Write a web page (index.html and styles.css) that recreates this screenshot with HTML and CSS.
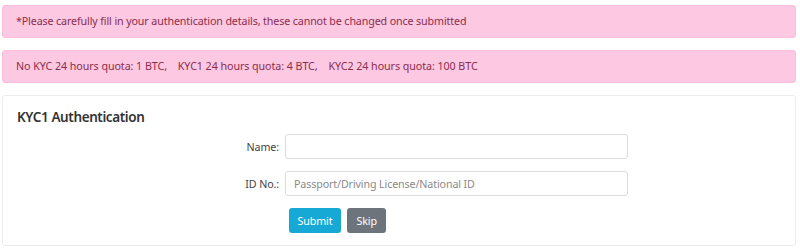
FILE: index.html
```html
<!DOCTYPE html>
<html lang="en">
<head>
  <meta charset="UTF-8" />
  <meta name="viewport" content="width=device-width, initial-scale=1.0" />
  <title>KYC Authentication</title>
  <link rel="stylesheet" href="styles.css">
</head>
<body>
  <div class="alert">*Please carefully fill in your authentication details, these cannot be changed once submitted</div>
  <div class="alert alert-wide">No KYC 24 hours quota: 1 BTC,&nbsp;&nbsp;&nbsp; KYC1 24 hours quota: 4 BTC,&nbsp;&nbsp;&nbsp; KYC2 24 hours quota: 100 BTC</div>

  <div class="card">
    <h4 class="card-title">KYC1 Authentication</h4>
    <form class="kyc-form">
      <div class="form-row">
        <label for="name">Name:</label>
        <input type="text" id="name">
      </div>
      <div class="form-row">
        <label for="idno">ID No.:</label>
        <input type="text" id="idno" placeholder="Passport/Driving License/National ID">
      </div>
      <div class="form-row">
        <span class="spacer"></span>
        <div class="button-group">
          <button type="button" class="btn btn-info">Submit</button>
          <button type="button" class="btn btn-secondary">Skip</button>
        </div>
      </div>
    </form>
  </div>
</body>
</html>
```

FILE: styles.css
```css
body {
  margin: 0;
  padding: 5px 4px 0 2px;
  font-family: 'Noto Sans', sans-serif;
  font-size: 10.7px;
  letter-spacing: -0.12px;
  background-color: #fff;
  color: #333;
}

.alert {
  background-color: #fdc8e1;
  color: #8b2d4f;
  border: 1px solid #fbbfd9;
  border-radius: 3px;
  height: 31px;
  line-height: 31px;
  padding: 0 13px;
  margin-bottom: 12px;
  white-space: nowrap;
}

.alert-wide {
  letter-spacing: -0.06px;
}

.card {
  border: 1px solid #ececec;
  border-radius: 3px;
  height: 151px;
  box-sizing: border-box;
  padding: 12px 14px 0;
}

.card-title {
  margin: 0 0 8px;
  font-size: 13.5px;
  line-height: 18px;
  letter-spacing: -0.4px;
  font-weight: 600;
  color: #333;
}

.kyc-form {
  display: flex;
  flex-direction: column;
  gap: 12px;
}

.form-row {
  display: flex;
  align-items: center;
}

.form-row label,
.spacer {
  width: 262px;
  text-align: right;
  padding-right: 6px;
  color: #444;
}

input[type="text"] {
  width: 343px;
  height: 25px;
  box-sizing: border-box;
  border: 1px solid #dcdcdc;
  border-radius: 3px;
  padding: 0 8px;
  font-family: inherit;
  font-size: 10.7px;
  letter-spacing: -0.12px;
  color: #333;
}

input::placeholder {
  color: #8a8a8a;
}

.button-group {
  display: flex;
  gap: 6px;
  padding-left: 4px;
}

.btn {
  height: 25px;
  border: none;
  border-radius: 3px;
  color: #fff;
  font-family: inherit;
  font-size: 10.7px;
  letter-spacing: -0.12px;
  padding: 0 8.5px;
  cursor: pointer;
}

.btn-info {
  background-color: #17a9d6;
}

.btn-secondary {
  background-color: #6d747b;
  padding: 0 9.5px;
}
```
